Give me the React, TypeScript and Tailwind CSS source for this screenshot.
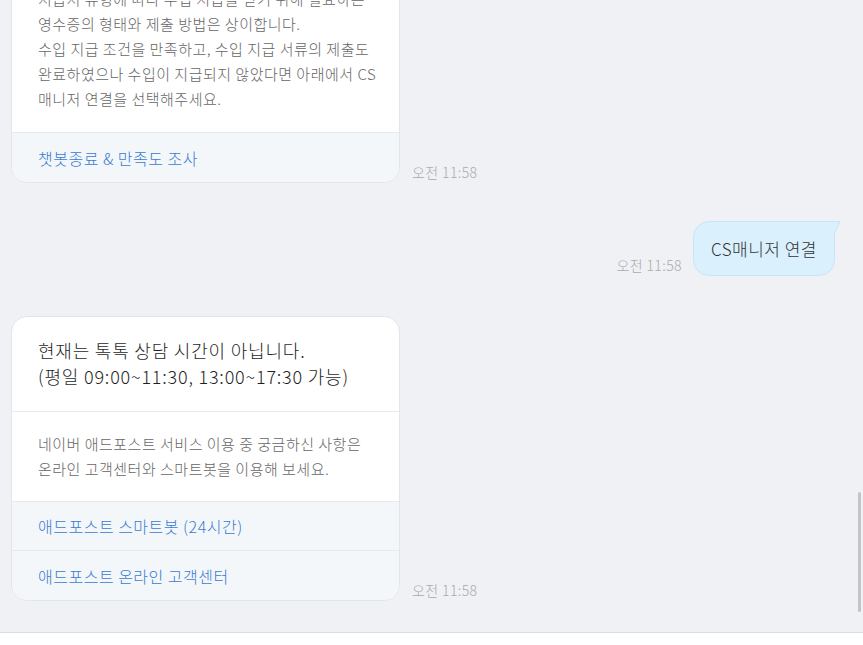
import React from 'react'

const font = { fontFamily: '"Noto Sans CJK KR", "Noto Sans", sans-serif' }

function Time() {
  return <span className="mb-[2px] shrink-0 text-[14px] font-light leading-[18px] tracking-[0.4px] text-[#aaaaaa]">오전 11:58</span>
}

function LinkRow({ label, last }: { label: string; last?: boolean }) {
  return (
    <div
      className={
        'flex h-[49px] items-center bg-[#f4f7fa] px-[26px] text-[16px] font-light tracking-[0.5px] text-[#3a7bd2]' +
        (last ? '' : ' border-b border-[#e6e9ee]')
      }
    >
      {label}
    </div>
  )
}

export default function App() {
  return (
    <div className="flex h-[645px] w-[863px] flex-col bg-white" style={font}>
      <div className="relative flex h-[632px] flex-col justify-end overflow-hidden bg-[#f0f1f5] pb-[31px]">
        {/* first bot card (clipped at top) */}
        <div className="flex items-end gap-[12px] pl-[11px]">
          <div className="w-[389px] overflow-hidden rounded-2xl border border-[#e2e5ea] bg-white">
            <div className="whitespace-nowrap px-[26px] pb-[21px] pt-[18px] text-[15px] font-light leading-[25px] tracking-[0.5px] text-[#666666]">
              지급처 유형에 따라 수입 지급을 받기 위해 필요하는
              <br />
              영수증의 형태와 제출 방법은 상이합니다.
              <br />
              수입 지급 조건을 만족하고, 수입 지급 서류의 제출도
              <br />
              완료하였으나 수입이 지급되지 않았다면 아래에서 CS
              <br />
              매니저 연결을 선택해주세요.
            </div>
            <div className="border-t border-[#e6e9ee]">
              <LinkRow label="챗봇종료 & 만족도 조사" last />
            </div>
          </div>
          <Time />
        </div>

        {/* user bubble */}
        <div className="mt-[38px] flex items-end justify-end gap-[11px] pr-[28px]">
          <Time />
          <div className="relative">
            <div className="flex h-[55px] items-center rounded-2xl rounded-tr-none border border-[#c8e4f7] bg-[#daf0fd] px-[17px] text-[17px] font-light tracking-[0.5px] text-[#333333]">
              CS매니저 연결
            </div>
            <svg className="absolute -right-[6px] top-0" width="8" height="14" viewBox="0 0 8 14">
              <path d="M0 0.5 L7 0.5 L1 13 L1 0.5 Z" fill="#daf0fd" />
              <path d="M1 0.5 L7 0.5 L1 13" fill="none" stroke="#c8e4f7" strokeWidth="1" />
            </svg>
          </div>
        </div>

        {/* second bot card */}
        <div className="mt-[40px] flex items-end gap-[12px] pl-[11px]">
          <div className="w-[389px] overflow-hidden rounded-2xl border border-[#e2e5ea] bg-white">
            <div className="whitespace-nowrap border-b border-[#e6e9ee] px-[26px] pb-[22px] pt-[20px] text-[18px] font-light leading-[26px] tracking-[0.8px] text-[#1f1f1f]">
              현재는 톡톡 상담 시간이 아닙니다.
              <br />
              (평일 09:00~11:30, 13:00~17:30 가능)
            </div>
            <div className="whitespace-nowrap border-b border-[#e6e9ee] px-[26px] pb-[20px] pt-[19px] text-[15px] font-light leading-[25px] tracking-[0.5px] text-[#666666]">
              네이버 애드포스트 서비스 이용 중 궁금하신 사항은
              <br />
              온라인 고객센터와 스마트봇을 이용해 보세요.
            </div>
            <LinkRow label="애드포스트 스마트봇 (24시간)" />
            <LinkRow label="애드포스트 온라인 고객센터" last />
          </div>
          <Time />
        </div>

        {/* scrollbar thumb */}
        <div className="absolute right-[2px] top-[492px] h-[120px] w-[3px] rounded-sm bg-[#c4c4c4]" />
      </div>
      <div className="flex-1 border-t border-[#dcdde1] bg-white" />
    </div>
  )
}
